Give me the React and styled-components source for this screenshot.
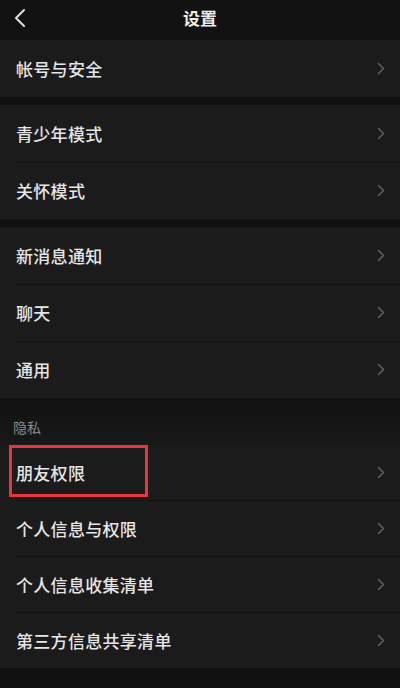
import React from "react";
import styled, { createGlobalStyle } from "styled-components";

const Global = createGlobalStyle`
  html, body { margin: 0; padding: 0; background: #111111; }
  body { font-family: "Noto Sans CJK SC", "Noto Sans", sans-serif; }
`;

const Page = styled.div`
  width: 400px;
  height: 688px;
  background: #111111;
  display: flex;
  flex-direction: column;
  overflow: hidden;
`;

const Header = styled.header`
  height: 40px;
  flex: none;
  display: grid;
  grid-template-columns: 48px 1fr 48px;
  align-items: center;
  background: #121212;
`;

const Back = styled.div`
  display: flex;
  align-items: center;
  padding-left: 13px;
  padding-bottom: 4px;
`;

const Title = styled.h1`
  margin: 0;
  text-align: center;
  color: #ececec;
  font-size: 17px;
  font-weight: 700;
  padding-bottom: 5px;
`;

const Group = styled.section`
  background: #1b1b1b;
  flex: none;
  display: flex;
  flex-direction: column;
`;

const Gap = styled.div`
  height: 8px;
  flex: none;
  background: #101010;
`;

const Label = styled.div`
  height: 46px;
  flex: none;
  box-sizing: border-box;
  background: linear-gradient(#121212, #181818);
  color: #8a8a8a;
  font-size: 14px;
  display: flex;
  align-items: flex-end;
  padding: 0 0 7px 13px;
`;

const Row = styled.div`
  position: relative;
  height: ${(p) => p.$h}px;
  display: flex;
  align-items: center;
  justify-content: space-between;
  padding: 0 15px 0 16px;
  box-sizing: border-box;
  & + &::before {
    content: "";
    position: absolute;
    left: 16px;
    right: 0;
    top: 0;
    height: 1px;
    background: #141414;
  }
`;

const Text = styled.span`
  color: #e6e6e6;
  font-size: 17px;
  font-weight: 500;
  letter-spacing: 0.3px;
`;

const Highlight = styled.div`
  position: absolute;
  left: 9px;
  top: 1px;
  width: 139px;
  height: 52px;
  border: 3px solid #e8363c;
  box-sizing: border-box;
  pointer-events: none;
`;

const Chevron = () => (
  <svg width="8" height="13" viewBox="0 0 8 13">
    <path d="M1.5 1.5 L6.5 6.5 L1.5 11.5" fill="none" stroke="#5e5e5e" strokeWidth="1.6" strokeLinecap="round" strokeLinejoin="round" />
  </svg>
);

const BackIcon = () => (
  <svg width="14" height="20" viewBox="0 0 14 20">
    <path d="M11 2 L3 10 L11 18" fill="none" stroke="#e0e0e0" strokeWidth="2" strokeLinecap="round" strokeLinejoin="round" />
  </svg>
);

const Item = ({ text, h = 57, boxed }) => (
  <Row $h={h}>
    <Text>{text}</Text>
    <Chevron />
    {boxed && <Highlight />}
  </Row>
);

const groups = [
  ["帐号与安全"],
  ["青少年模式", "关怀模式"],
  ["新消息通知", "聊天", "通用"],
];

const privacy = ["朋友权限", "个人信息与权限", "个人信息收集清单", "第三方信息共享清单"];

export default function App() {
  return (
    <Page>
      <Global />
      <Header>
        <Back><BackIcon /></Back>
        <Title>设置</Title>
        <span />
      </Header>
      {groups.map((g, i) => (
        <React.Fragment key={i}>
          {i > 0 && <Gap />}
          <Group>
            {g.map((t) => (
              <Item key={t} text={t} />
            ))}
          </Group>
        </React.Fragment>
      ))}
      <Label>隐私</Label>
      <Group>
        {privacy.map((t, i) => (
          <Item key={t} text={t} h={56} boxed={i === 0} />
        ))}
      </Group>
    </Page>
  );
}
